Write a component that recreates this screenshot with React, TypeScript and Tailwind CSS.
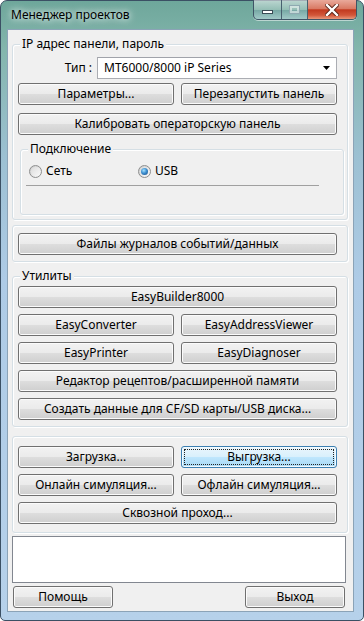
import React from 'react';

const btn =
  "flex items-center justify-center h-[22px] rounded-[3px] border border-[#707070] bg-[linear-gradient(to_bottom,#f2f2f2_0%,#ebebeb_48%,#dddddd_52%,#cfcfcf_100%)] shadow-[inset_0_0_0_1px_#fbfbfb] text-[12px] leading-none text-black";

const btnFocus =
  "relative flex items-center justify-center h-[22px] rounded-[3px] border border-[#3c7fb1] bg-[linear-gradient(to_bottom,#eaf6fd_0%,#d9f0fc_48%,#bee6fd_52%,#a7d9f5_100%)] shadow-[inset_0_0_0_1px_#f4fbfe] text-[12px] leading-none text-black";

function Group({ label, className, children }: { label?: string; className?: string; children: React.ReactNode }) {
  return (
    <div className={"relative rounded-[3px] border border-[#d5dfe5] shadow-[inset_1px_1px_0_#ffffff,1px_1px_0_#ffffff] " + (className || '')}>
      {label && (
        <span className="absolute -top-[9px] left-[7px] bg-[#f0f0f0] px-[2px] text-[12px] leading-[16px] text-black">
          {label}
        </span>
      )}
      {children}
    </div>
  );
}

function Radio({ checked, label }: { checked?: boolean; label: string }) {
  return (
    <div className="flex items-center gap-[4px] text-[12px] leading-[16px]">
      <span className="flex h-[13px] w-[13px] items-center justify-center rounded-full border border-[#8e8f8f] bg-[linear-gradient(135deg,#c9c9c9,#fdfdfd)]">
        <span className="flex h-[9px] w-[9px] items-center justify-center rounded-full bg-[linear-gradient(135deg,#dcdcdc,#f8f8f8)]">
          {checked && (
            <span className="h-[7px] w-[7px] rounded-full bg-[radial-gradient(circle_at_40%_35%,#a6e2ff_0%,#3d8fd0_45%,#164a82_100%)]" />
          )}
        </span>
      </span>
      <span>{label}</span>
    </div>
  );
}

export default function App() {
  return (
    <div className="h-[621px] w-[364px] bg-white font-['Noto_Sans',sans-serif]">
      <div className="flex h-[621px] w-[364px] flex-col rounded-t-[7px] rounded-b-[5px] border border-[#3b5064] bg-[linear-gradient(to_bottom,#6ea79b_0%,#84b6ad_8%,#9cc0d2_25%,#aecbe6_45%,#b6d1ea_100%)]">
        {/* title bar */}
        <div className="flex h-[27px] shrink-0 items-start">
          <span className="mt-[6px] ml-[10px] text-[12px] leading-[16px] text-black [text-shadow:0_0_6px_rgba(255,255,255,0.9),0_0_10px_rgba(255,255,255,0.7)]">
            Менеджер проектов
          </span>
          <div className="mr-[6px] ml-auto flex h-[20px] -mt-px overflow-hidden rounded-b-[5px] border border-t-0 border-[#3f5466] shadow-[0_1px_0_rgba(255,255,255,0.5)]">
            <div className="flex w-[28px] items-end justify-center border-r border-[#48606f] bg-[linear-gradient(to_bottom,rgba(255,255,255,0.55)_0%,rgba(255,255,255,0.25)_50%,rgba(120,160,170,0.35)_51%,rgba(190,220,225,0.6)_100%)] pb-[5px]">
              <span className="h-[4px] w-[11px] border border-[#394b55] bg-white" />
            </div>
            <div className="flex w-[26px] items-center justify-center border-r border-[#48606f] bg-[linear-gradient(to_bottom,rgba(255,255,255,0.55)_0%,rgba(255,255,255,0.25)_50%,rgba(120,160,170,0.35)_51%,rgba(190,220,225,0.6)_100%)]">
              <span className="h-[9px] w-[11px] border border-[#8fa9b1] shadow-[inset_0_0_0_2px_rgba(255,255,255,0.5)]" />
            </div>
            <div className="flex w-[48px] items-center justify-center bg-[linear-gradient(to_bottom,#e9a99b_0%,#d97a64_45%,#c2391f_52%,#d3573a_80%,#e9987b_100%)]">
              <svg width="14" height="12" viewBox="0 0 14 12">
                <path d="M2 1 L12 11 M12 1 L2 11" stroke="#5a2418" strokeWidth="4.2" strokeLinecap="square" />
                <path d="M2 1 L12 11 M12 1 L2 11" stroke="#ffffff" strokeWidth="2.4" strokeLinecap="square" />
              </svg>
            </div>
          </div>
        </div>

        {/* client area */}
        <div className="ml-[6px] mt-px flex h-[583px] w-[347px] shrink-0 flex-col border border-[#8ba3b7] bg-[#f0f0f0] pl-[4px]">
          {/* group 1 */}
          <Group label="IP адрес панели, пароль" className="mt-[14px] flex h-[176px] w-[336px] flex-col pt-[12px] pl-[5px] pr-[10px]">
            <div className="flex items-center justify-end gap-[5px]">
              <span className="text-[12px] leading-none">Тип :</span>
              <div className="flex h-[22px] w-[240px] items-center border border-[#abadb3] border-t-[#a0a3aa] bg-white pl-[6px] pr-[6px] text-[12px] leading-none">
                <span>MT6000/8000 iP Series</span>
                <svg className="ml-auto" width="7" height="4" viewBox="0 0 7 4">
                  <path d="M0 0 H7 L3.5 4 Z" fill="#000" />
                </svg>
              </div>
            </div>
            <div className="mt-[4px] flex gap-[7px]">
              <button className={btn + " w-[156px]"}>Параметры...</button>
              <button className={btn + " w-[156px]"}>Перезапустить панель</button>
            </div>
            <button className={btn + " mt-[8px] w-[319px]"}>Калибровать операторскую панель</button>
            <Group label="Подключение" className="mt-[14px] ml-[2px] h-[66px] w-[324px] shrink-0 pt-[13px] pl-[5px]">
              <div className="flex pl-[3px]">
                <div className="w-[109px]">
                  <Radio label="Сеть" />
                </div>
                <Radio checked label="USB" />
              </div>
              <div className="mt-[6px] h-px w-[293px] bg-[#a0a0a0]" />
            </Group>
          </Group>

          {/* group 2 */}
          <Group className="mt-[5px] w-[336px] pt-[7px] pb-[6px] pl-[5px]">
            <button className={btn + " w-[319px]"}>Файлы журналов событий/данных</button>
          </Group>

          {/* utilities */}
          <Group label="Утилиты" className="mt-[14px] flex w-[336px] flex-col gap-[6px] pt-[9px] pb-[6px] pl-[5px]">
            <button className={btn + " w-[319px]"}>EasyBuilder8000</button>
            <div className="flex gap-[7px]">
              <button className={btn + " w-[156px]"}>EasyConverter</button>
              <button className={btn + " w-[156px]"}>EasyAddressViewer</button>
            </div>
            <div className="flex gap-[7px]">
              <button className={btn + " w-[156px]"}>EasyPrinter</button>
              <button className={btn + " w-[156px]"}>EasyDiagnoser</button>
            </div>
            <button className={btn + " w-[319px]"}>Редактор рецептов/расширенной памяти</button>
            <button className={btn + " w-[319px]"}>Создать данные для CF/SD карты/USB диска...</button>
          </Group>

          {/* transfer */}
          <Group className="mt-[9px] flex w-[336px] flex-col gap-[6px] pt-[9px] pb-[8px] pl-[5px]">
            <div className="flex gap-[7px]">
              <button className={btn + " w-[156px]"}>Загрузка...</button>
              <button className={btnFocus + " w-[156px]"}>
                <span className="pointer-events-none absolute inset-[2px] border border-dotted border-[#222]" />
                Выгрузка...
              </button>
            </div>
            <div className="flex gap-[7px]">
              <button className={btn + " w-[156px]"}>Онлайн симуляция...</button>
              <button className={btn + " w-[156px]"}>Офлайн симуляция...</button>
            </div>
            <button className={btn + " w-[319px]"}>Сквозной проход...</button>
          </Group>

          {/* log box */}
          <div className="mt-[3px] h-[47px] w-[334px] border border-[#828790] bg-white" />

          <div className="mt-[3px] flex w-[333px] justify-between pl-px">
            <button className={btn + " h-[19px] w-[100px]"}>Помощь</button>
            <button className={btn + " h-[19px] w-[100px]"}>Выход</button>
          </div>
        </div>
      </div>
    </div>
  );
}
